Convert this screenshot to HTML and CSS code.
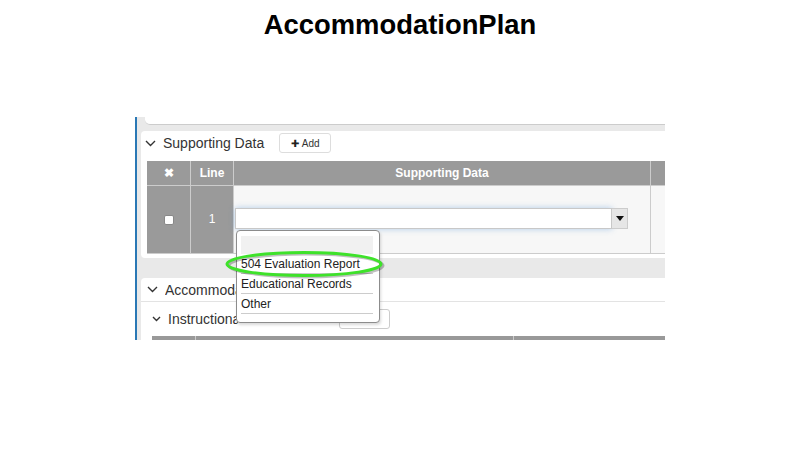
FILE: index.html
```html
<!DOCTYPE html>
<html lang="en">
<head>
    <meta charset="UTF-8">
    <title>AccommodationPlan</title>
    <link rel="stylesheet" href="styles.css">
</head>
<body>
    <h1>AccommodationPlan</h1>

    <div class="shot">
        <!-- bottom of previous panel -->
        <div class="prev-panel"></div>

        <!-- Supporting Data panel -->
        <div class="panel">
            <div class="panel-head">
                <svg class="chev" width="11" height="7" viewBox="0 0 11 7"><polyline points="1,1 5.5,5.5 10,1" fill="none" stroke="#333" stroke-width="1.4"/></svg>
                <span class="panel-title">Supporting Data</span>
                <button class="add-btn"><span class="plus">✚</span> Add</button>
            </div>
            <div class="grid">
                <div class="grid-row head">
                    <div class="cell c1">✖</div>
                    <div class="cell c2">Line</div>
                    <div class="cell c3">Supporting Data</div>
                    <div class="cell c4"></div>
                </div>
                <div class="grid-row body">
                    <div class="cell c1"><span class="check"></span></div>
                    <div class="cell c2">1</div>
                    <div class="cell c3 light">
                        <div class="combo">
                            <div class="combo-input"></div>
                            <div class="combo-arrow"><span class="tri"></span></div>
                        </div>
                    </div>
                    <div class="cell c4 light"></div>
                </div>
            </div>
        </div>

        <!-- Accommodations panel -->
        <div class="panel second">
            <div class="panel-head line">
                <svg class="chev" width="11" height="7" viewBox="0 0 11 7"><polyline points="1,1 5.5,5.5 10,1" fill="none" stroke="#333" stroke-width="1.4"/></svg>
                <span class="panel-title clip-a">Accommodations</span>
            </div>
            <div class="sub-head">
                <svg class="chev" width="9" height="6" viewBox="0 0 9 6"><polyline points="1,1 4.5,4.5 8,1" fill="none" stroke="#333" stroke-width="1.4"/></svg>
                <span class="panel-title clip-b">Instructional</span>
                <button class="add-btn ghost"></button>
            </div>
            <div class="bar">
                <span class="bar-col a"></span>
                <span class="bar-col b"></span>
            </div>
        </div>

        <!-- open dropdown list -->
        <ul class="dropdown">
            <li class="empty"></li>
            <li>504 Evaluation Report</li>
            <li>Educational Records</li>
            <li>Other</li>
        </ul>

        <!-- green highlight -->
        <svg class="ring" width="164" height="30" viewBox="0 0 164 30">
            <ellipse cx="83" cy="15.5" rx="77" ry="11.5" fill="none" stroke="#000" stroke-opacity="0.25" stroke-width="3"/>
            <ellipse cx="81" cy="14" rx="77" ry="11.5" fill="none" stroke="#3ee22a" stroke-width="3"/>
        </svg>
    </div>
</body>
</html>
```

FILE: styles.css
```css
body {
    margin: 0;
    background-color: #FFFFFF;
    font-family: "Liberation Sans", Arial, sans-serif;
    color: #333333;
}
h1 {
    margin: 9px 0 0;
    font-size: 27.4px;
    line-height: 31px;
    text-align: center;
    color: #000000;
}
.shot {
    position: relative;
    margin: 77px 0 0 135px;
    width: 528px;
    height: 223px;
    overflow: hidden;
    background-color: #e9e9e9;
    border-left: 2px solid #2a78b5;
}
.prev-panel {
    margin-left: 8px;
    width: 600px;
    height: 7px;
    background-color: #FFFFFF;
    border-bottom: 1px solid #cccccc;
    border-bottom-left-radius: 5px;
}
.panel {
    margin: 6px 0 0 4px;
    width: 600px;
    padding-bottom: 4px;
    background-color: #FFFFFF;
    border-radius: 4px;
}
.panel.second {
    margin-top: 20px;
    padding-bottom: 0;
}
.panel-head {
    display: flex;
    align-items: center;
    height: 20px;
    padding: 2px 0 0 4px;
}
.panel-head.line {
    height: 23px;
    padding-top: 0;
    padding-left: 6px;
    border-bottom: 1px solid #e3e3e3;
}
.chev {
    display: block;
    margin-right: 7px;
}
.panel-title {
    font-size: 14px;
    white-space: nowrap;
}
/* texts hidden behind the open list */
.clip-a {
    width: 74px;
    overflow: hidden;
}
.clip-b {
    width: 70px;
    overflow: hidden;
}
.add-btn {
    display: flex;
    align-items: center;
    justify-content: center;
    margin-left: 15px;
    width: 52px;
    height: 20px;
    padding: 0;
    background-color: #FFFFFF;
    border: 1px solid #dddddd;
    border-radius: 3px;
    font-family: "Liberation Sans", Arial, sans-serif;
    font-size: 10px;
    color: #333333;
}
.plus {
    margin-right: 3px;
    font-size: 10px;
    color: #222222;
}
.grid {
    margin: 8px 0 0 6px;
}
.grid-row {
    display: flex;
}
.cell {
    box-sizing: border-box;
    border-right: 1px solid #cccccc;
    border-bottom: 1px solid #cccccc;
    background-color: #9a9a9a;
    color: #FFFFFF;
    font-size: 12px;
    text-align: center;
}
.head .cell {
    height: 25px;
    line-height: 24px;
    font-weight: bold;
}
.body .cell {
    height: 68px;
    line-height: 66px;
}
.c1 { width: 44px; }
.c2 { width: 43px; }
.c3 { width: 417px; }
.c4 { width: 70px; }
.cell.light {
    background-color: #f7f7f7;
}
.check {
    display: inline-block;
    width: 10px;
    height: 10px;
    vertical-align: middle;
    background-color: #FFFFFF;
    border: 1px solid #888888;
    border-radius: 2px;
    box-sizing: border-box;
}
.combo {
    display: flex;
    margin: 22px 0 0 1px;
    line-height: normal;
}
.combo-input {
    box-sizing: border-box;
    width: 377px;
    height: 21px;
    background-color: #FFFFFF;
    border: 1px solid #c8c8c8;
    box-shadow: 0 0 6px rgba(90, 150, 215, 0.45);
}
.combo-arrow {
    box-sizing: border-box;
    display: flex;
    align-items: center;
    justify-content: center;
    width: 16px;
    height: 21px;
    background-color: #e6e6e6;
    border: 1px solid #cccccc;
    border-left: none;
}
.tri {
    width: 0;
    height: 0;
    border-left: 4px solid transparent;
    border-right: 4px solid transparent;
    border-top: 5px solid #111111;
}
.sub-head {
    display: flex;
    align-items: center;
    height: 20px;
    padding: 7px 0 7px 11px;
}
.add-btn.ghost {
    margin-left: 101px;
    width: 51px;
    border-color: #cccccc;
}
.bar {
    display: flex;
    margin-left: 11px;
    height: 12px;
    background-color: #999999;
}
.bar-col {
    box-sizing: border-box;
    border-right: 1px solid #cccccc;
}
.bar-col.a { width: 44px; }
.bar-col.b { width: 318px; }
.dropdown {
    position: absolute;
    left: 99px;
    top: 113px;
    box-sizing: border-box;
    width: 144px;
    height: 93px;
    margin: 0;
    padding: 5px 6px 0 4px;
    list-style: none;
    background-color: #FFFFFF;
    border: 1px solid #8c8c8c;
    border-radius: 4px;
    box-shadow: 1px 2px 3px rgba(0, 0, 0, 0.15);
}
.dropdown li {
    box-sizing: border-box;
    height: 20px;
    line-height: 20px;
    border-bottom: 1px solid #cccccc;
    font-size: 12px;
    color: #222222;
    white-space: nowrap;
}
.dropdown li.empty {
    height: 18px;
    background-color: #f1f1f1;
    border-bottom: none;
}
.ring {
    position: absolute;
    left: 86px;
    top: 133px;
}
```
